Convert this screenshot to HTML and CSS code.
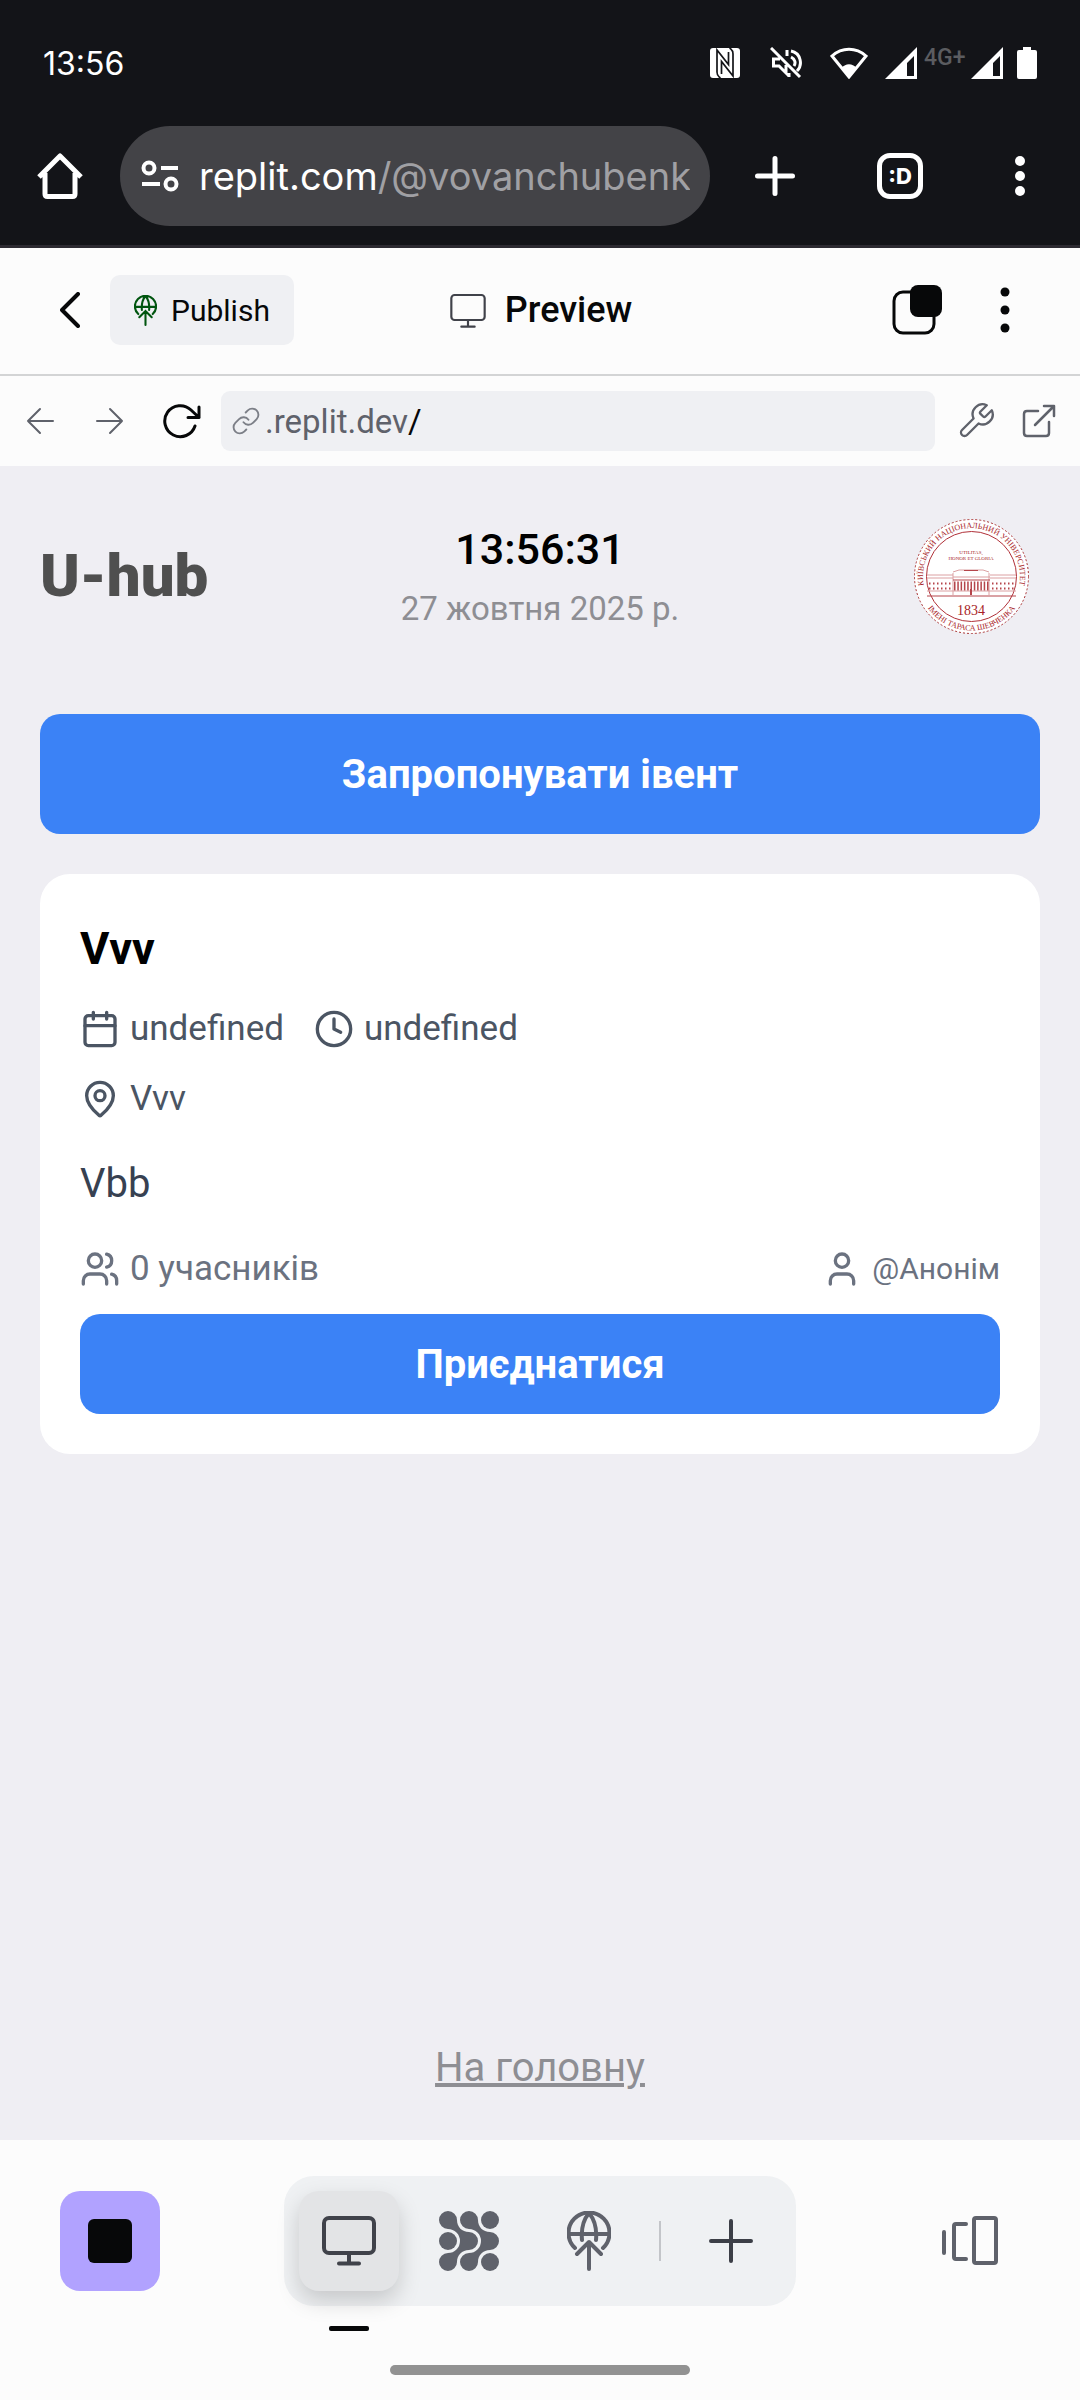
FILE: index.html
```html
<!DOCTYPE html>
<html lang="uk">
<head>
<meta charset="utf-8">
<meta name="viewport" content="width=device-width, initial-scale=1">
<title>U-hub</title>
<link rel="stylesheet" href="styles.css">
</head>
<body>
<svg width="0" height="0" class="defs" aria-hidden="true">
  <symbol id="monitor" viewBox="0 0 24 24"><rect x="2" y="3" width="20" height="15" rx="2"/><path d="M12 18v4M8 22h8"/></symbol>
  <symbol id="publish" viewBox="0 0 44 60"><path d="M8 37A20.500 20.500 0 1 1 36 37M2 23h40M15 29C14 18 17 8 22 2c5 6 8 16 7 27M22 58V31M10 43l12-12 12 12"/></symbol>
  <symbol id="signal" viewBox="0 0 32 32"><path fill="currentColor" fill-rule="evenodd" d="M32 0v32H0zM29 9l-7 7v13h7z"/></symbol>
</svg>

<div class="screen">
  <header class="browser">
    <div class="status">
      <span class="status-time">13:56</span>
      <div class="status-icons">
        <svg class="nfc" viewBox="0 0 30 30"><rect width="30" height="30" rx="3" fill="#fff"/><path d="M10.500 30Q7 28 7 24V2l11.500 14.500V4M19.500 0Q23 2 23 6v22L11.500 13.500V26" fill="none" stroke="#131418" stroke-width="1.700"/></svg>
        <svg class="mute" viewBox="0 0 32 32" fill="none" stroke="#fff" stroke-width="3"><path d="M10 12H3.500v7H9l7 7v-8M17 9V3M21 4c10 2 12 14 6 20M21 10c4 2 5 6 3 9M19 26v4M1 1l29 29"/></svg>
        <svg class="wifi" viewBox="0 0 38 32"><path d="M2 9c10-9 24-9 34 0L19 30z" fill="none" stroke="#fff" stroke-width="3"/><path d="M12 21c3-5 11-5 14 0l-7 10z" fill="#fff"/></svg>
        <svg class="sig"><use href="#signal"/></svg>
        <span class="network">4G+</span>
        <svg class="sig"><use href="#signal"/></svg>
        <svg class="battery" viewBox="0 0 20 32"><path fill="#fff" d="M6 0h8v3h4q2 0 2 2v25q0 2-2 2H2q-2 0-2-2V5q0-2 2-2h4z"/></svg>
      </div>
    </div>
    <div class="address-bar">
      <button class="icon-btn" aria-label="Home"><svg class="i46" viewBox="0 0 46 46" fill="none" stroke="#fff" stroke-width="5" stroke-linejoin="round"><path d="M2 24 23 3l21 21M8 20v21q0 2.500 2.500 2.500h25Q38 43.500 38 41V20"/></svg></button>
      <div class="address">
        <svg class="tune" viewBox="0 0 38 32" fill="none" stroke="#fff" stroke-width="4"><circle cx="8" cy="8" r="5.500"/><circle cx="30" cy="24" r="5.500"/><path d="M20 8h17M1 24h18"/></svg>
        <div class="url">replit.com<span>/@vovanchubenk</span></div>
      </div>
      <button class="icon-btn" aria-label="New tab"><svg class="i46" viewBox="0 0 46 46" stroke="#fff" stroke-width="5" stroke-linecap="round"><path d="M23 5.500v35M5.500 23h35"/></svg></button>
      <button class="icon-btn tabs"><span>:D</span></button>
      <button class="icon-btn" aria-label="More"><svg class="i46" viewBox="0 0 46 46" fill="#fff"><circle cx="23" cy="8" r="5"/><circle cx="23" cy="23" r="5"/><circle cx="23" cy="38" r="5"/></svg></button>
    </div>
  </header>

  <nav class="workspace">
    <div class="workspace-left">
      <button class="icon-btn" aria-label="Back"><svg class="chevron" viewBox="0 0 20 36"><path d="M18 2 2 18l16 16"/></svg></button>
      <button class="publish"><svg><use href="#publish"/></svg>Publish</button>
    </div>
    <div class="workspace-title"><svg><use href="#monitor"/></svg>Preview</div>
    <div class="workspace-right">
      <button class="icon-btn" aria-label="Tabs"><svg class="i50" viewBox="0 0 50 50"><rect x="2" y="7" width="40" height="41" rx="9" fill="none" stroke="#070809" stroke-width="3"/><rect x="18" y="0" width="32" height="32" rx="8" fill="#070809"/></svg></button>
      <button class="icon-btn" aria-label="Menu"><svg class="i46" viewBox="0 0 46 46" fill="#070809"><circle cx="23" cy="5" r="4.500"/><circle cx="23" cy="23" r="4.500"/><circle cx="23" cy="41" r="4.500"/></svg></button>
    </div>
  </nav>

  <div class="preview-bar">
    <button class="icon-btn" aria-label="Back"><svg class="arrow" viewBox="0 0 28 28"><path d="M27 14H2M14 2 2 14l12 12"/></svg></button>
    <button class="icon-btn" aria-label="Forward"><svg class="arrow" viewBox="0 0 28 28"><path d="M1 14h25M14 2l12 12-12 12"/></svg></button>
    <button class="icon-btn" aria-label="Reload"><svg class="reload" viewBox="0 0 38 36"><path d="M32 23A15.500 15.500 0 1 1 28 7l8 7.500M36 4v10.500H25"/></svg></button>
    <div class="preview-url">
      <svg viewBox="0 0 24 24"><path d="M10 13a5 5 0 0 0 7.540.540l3-3a5 5 0 0 0-7.070-7.070l-1.720 1.710M14 11a5 5 0 0 0-7.540-.540l-3 3a5 5 0 0 0 7.070 7.070l1.710-1.710"/></svg>
      <span>.replit.dev<b>/</b></span>
    </div>
    <button class="icon-btn" aria-label="Tools"><svg class="tool" viewBox="0 0 24 24"><path d="M14.700 6.300a1 1 0 0 0 0 1.400l1.600 1.600a1 1 0 0 0 1.400 0l3.770-3.770a6 6 0 0 1-7.940 7.940l-6.910 6.910a2.120 2.120 0 0 1-3-3l6.910-6.910a6 6 0 0 1 7.940-7.940l-3.760 3.760z"/></svg></button>
    <button class="icon-btn" aria-label="Open"><svg class="external" viewBox="0 0 34 34"><path d="M16 7H5q-3 0-3 3v19q0 3 3 3h19q3 0 3-3V18M22 2h10v10M32 2 13 21"/></svg></button>
  </div>

  <main class="app">
    <div class="app-header">
      <h1>U-hub</h1>
      <div class="clock">
        <time class="clock-time">13:56:31</time>
        <span class="clock-date">27 жовтня 2025 р.</span>
      </div>
      <svg class="seal" viewBox="0 0 140 140">
        <defs><path id="arc-top" d="M27.500 91A48.500 48.500 0 1 1 115.500 91"/><path id="arc-bottom" d="M17.500 70.500A54 54 0 0 0 125.500 70.500"/></defs>
        <circle cx="71.500" cy="70.500" r="57" fill="#fff" stroke="#a33" stroke-width="1" stroke-dasharray="2 2"/>
        <circle cx="71.500" cy="70.500" r="45" fill="none" stroke="#b03038" stroke-width="1"/>
        <g class="seal-text">
          <text font-size="8"><textPath href="#arc-top" startOffset="50%" text-anchor="middle">КИЇВСЬКИЙ НАЦІОНАЛЬНИЙ УНІВЕРСИТЕТ</textPath></text>
          <text font-size="8"><textPath href="#arc-bottom" startOffset="50%" text-anchor="middle">ІМЕНІ ТАРАСА ШЕВЧЕНКА</textPath></text>
          <text x="71" y="48" font-size="5" text-anchor="middle">UTILITAS,</text>
          <text x="71" y="54" font-size="5" text-anchor="middle">HONOR ET GLORIA</text>
          <text x="71" y="109" font-size="14" text-anchor="middle">1834</text>
        </g>
        <g fill="none" stroke="#b5454b"><path stroke="#dba0a2" d="M27 69h26M90 69h26M27 72h26M90 72h26M53 67v22M89 67v22M53 66l6-2h24l6 2M53 71h37M27 85h89"/><path d="M64 64.500h14M27 90h89M53 74h37"/><path stroke-width="2" stroke-dasharray="1.500 2.500" d="M29 77.500h24M92 77.500h24M29 82.500h24M92 82.500h24"/><path stroke-width="9" stroke-dasharray="1.500 1.800" d="M54 80h35"/><path stroke-width="2" d="M71 83v6"/></g>
      </svg>
    </div>

    <button class="primary propose">Запропонувати івент</button>

    <article class="card">
      <h2>Vvv</h2>
      <div class="meta">
        <span class="item"><svg viewBox="0 0 24 24"><path d="M8 2v4M16 2v4M3 10h18"/><rect x="3" y="4" width="18" height="18" rx="2"/></svg>undefined</span>
        <span class="item"><svg viewBox="0 0 24 24"><circle cx="12" cy="12" r="10"/><path d="M12 6v6l4 2"/></svg>undefined</span>
      </div>
      <div class="meta">
        <span class="item"><svg viewBox="0 0 24 24"><path d="M20 10c0 4.990-5.540 10.190-7.400 11.800a1 1 0 0 1-1.200 0C9.540 20.190 4 14.990 4 10a8 8 0 0 1 16 0"/><circle cx="12" cy="10" r="3"/></svg>Vvv</span>
      </div>
      <p>Vbb</p>
      <div class="people">
        <span class="item"><svg viewBox="0 0 24 24"><path d="M16 21v-2a4 4 0 0 0-4-4H6a4 4 0 0 0-4 4v2M22 21v-2a4 4 0 0 0-3-3.870M16 3.130a4 4 0 0 1 0 7.750"/><circle cx="9" cy="7" r="4"/></svg>0 учасників</span>
        <span class="item author"><svg viewBox="0 0 24 24"><path d="M19 21v-2a4 4 0 0 0-4-4H9a4 4 0 0 0-4 4v2"/><circle cx="12" cy="7" r="4"/></svg>@Анонім</span>
      </div>
      <button class="primary join">Приєднатися</button>
    </article>

    <a class="home-link" href="#">На головну</a>
  </main>

  <footer class="dock">
    <div class="dock-row">
      <button class="tile stop" aria-label="Stop"><span></span></button>
      <div class="group">
        <button class="tile active" aria-label="Preview"><svg class="d-monitor" viewBox="0 0 54 50"><rect x="2" y="2" width="50" height="35" rx="5"/><path d="M27 37v10M17 47.500h20"/></svg></button>
        <button class="tile" aria-label="Agent"><svg class="agent" viewBox="0 0 60 60"><path d="M9 0A9 9 0 0 1 18 9C18 16 23 21 30 21A9 9 0 0 1 30 39C23 39 18 44 18 51A9 9 0 1 1 9 42A12 12 0 0 0 9 18A9 9 0 0 1 9 0z"/><path d="M30 0A9 9 0 0 1 39 9C39 16 44 21 51 21A9 9 0 0 1 51 39C44 39 39 44 39 51A9 9 0 1 1 30 42A12 12 0 0 0 30 18A9 9 0 0 1 30 0z"/><circle cx="51" cy="9" r="9"/><circle cx="9" cy="30" r="9"/><circle cx="51" cy="51" r="9"/></svg></button>
        <button class="tile" aria-label="Publish"><svg class="d-publish"><use href="#publish"/></svg></button>
        <span class="divider"></span>
        <button class="tile" aria-label="Add"><svg class="d-plus" viewBox="0 0 44 44"><path d="M22 2v40M2 22h40"/></svg></button>
      </div>
      <button class="tile" aria-label="Switch"><svg class="switch" viewBox="0 0 56 50"><path d="M2 16v21M24 8H14q-2 0-2 2v31q0 2 2 2h10"/><rect x="32" y="2" width="22" height="45" rx="2"/></svg></button>
    </div>
    <div class="gesture"></div>
  </footer>
</div>
</body>
</html>
```
FILE: styles.css
```css
* { box-sizing: border-box; }
body { margin: 0; font-family: Roboto, "Noto Sans", sans-serif; background: #fcfcfc; }
h1, h2, p { margin: 0; }
svg { display: block; flex: none; }
button { border: 0; padding: 0; background: none; font: inherit; color: inherit; cursor: pointer; }
.defs { position: absolute; }
.screen { min-height: 100vh; display: flex; flex-direction: column; }
.icon-btn { display: grid; place-items: center; flex: none; }
.i46 { width: 46px; height: 46px; }
.i50 { width: 50px; height: 50px; }

/* browser chrome */
.browser { background: #131418; color: #fff; border-bottom: 3px solid #2c2a31; font-family: Inter, Roboto, sans-serif; }
.status { height: 126px; padding: 0 43px; display: flex; align-items: center; justify-content: space-between; }
.status-time { font-size: 32px; }
.status-icons { display: flex; align-items: center; }
.nfc { width: 30px; height: 30px; margin-right: 30px; }
.mute { width: 32px; height: 32px; margin-right: 28px; }
.wifi { width: 38px; height: 32px; margin-right: 17px; }
.sig { width: 32px; height: 32px; }
.network { width: 54px; height: 32px; padding-left: 7px; font: 500 23px/22px Roboto, sans-serif; color: #5b5c60; }
.battery { width: 20px; height: 32px; margin-left: 14px; }
.address-bar { display: flex; align-items: center; padding: 0 37px 19px; }
.address { flex: 1; min-width: 0; height: 100px; margin: 0 42px 0 37px; padding: 0 20px 0 21px; border-radius: 50px; background: #434347; display: flex; align-items: center; gap: 20px; }
.tune { width: 38px; height: 32px; }
.url { flex: 1; min-width: 0; overflow: hidden; white-space: nowrap; font-size: 38px; line-height: 50px; }
.url span { color: #a0a0a4; }
.tabs { width: 46px; height: 46px; margin: 0 74px 0 79px; border: 5px solid #fff; border-radius: 13px; font-size: 22px; font-weight: 800; line-height: 1; }

/* workspace header */
.workspace { height: 128px; padding: 0 52px 2px; display: grid; grid-template-columns: 1fr auto 1fr; align-items: center; background: #fcfcfc; border-bottom: 2px solid #d3d4d5; color: #070809; }
.workspace-left { display: flex; align-items: center; gap: 30px; padding-left: 8px; }
.chevron { width: 20px; height: 36px; fill: none; stroke: #070809; stroke-width: 4; stroke-linecap: round; stroke-linejoin: round; }
.publish { height: 70px; padding: 0 24px; display: flex; align-items: center; gap: 14px; border-radius: 10px; background: #eff0f3; font-size: 30px; }
.publish svg { width: 23px; height: 31px; fill: none; stroke: #00550f; stroke-width: 4; stroke-linecap: round; }
.workspace-title { display: flex; align-items: center; gap: 17px; font-size: 36px; font-weight: 500; }
.workspace-title svg { width: 40px; height: 40px; fill: none; stroke: #40424a; stroke-width: 1.3; stroke-linecap: round; }
.workspace-right { display: flex; align-items: center; justify-content: flex-end; gap: 40px; }

/* preview address row */
.preview-bar { height: 90px; padding: 0 24px 0 26px; display: flex; align-items: center; background: #fcfcfc; fill: none; stroke-linecap: round; stroke-linejoin: round; }
.arrow { width: 28px; height: 28px; margin-right: 42px; stroke: #5f626b; stroke-width: 2; }
.reload { width: 38px; height: 36px; margin-right: 20px; margin-left: -3px; stroke: #070809; stroke-width: 3; }
.preview-url { flex: 1; min-width: 0; height: 60px; padding: 0 10px; display: flex; align-items: center; gap: 4px; border-radius: 9px; background: #eff0f3; font-size: 33px; color: #5f626b; }
.preview-url svg { width: 30px; height: 30px; stroke: #7c7f87; stroke-width: 1.5; }
.preview-url b { font-weight: 400; color: #070809; }
.tool { width: 40px; height: 40px; margin: 0 26px 0 21px; stroke: #5f626b; stroke-width: 1.4; }
.external { width: 34px; height: 34px; stroke: #5f626b; stroke-width: 2.5; }

/* app */
.app { flex: 1; display: flex; flex-direction: column; padding: 40px 40px 48px; background: #efeef3; }
.app-header { display: grid; grid-template-columns: 1fr auto 1fr; align-items: center; margin-bottom: 68px; }
.app-header h1 { font-size: 60px; line-height: 72px; font-weight: 900; color: #4f4f4f; }
.clock { display: flex; flex-direction: column; align-items: center; gap: 10px; }
.clock-time { font-size: 43px; line-height: 56px; font-weight: 500; color: #000; }
.clock-date { font-size: 33px; line-height: 44px; color: #8e8e93; }
.seal { width: 140px; height: 140px; justify-self: end; }
.seal-text { font-family: "Liberation Serif", serif; fill: #a81e28; }
.primary { width: 100%; border-radius: 20px; background: #3b82f6; color: #fff; font-size: 40px; font-weight: 700; }
.propose { height: 120px; }
.card { margin-top: 40px; padding: 40px; border-radius: 30px; background: #fff; }
.card h2 { font-size: 45px; line-height: 70px; font-weight: 700; color: #000; margin-bottom: 20px; }
.meta { display: flex; gap: 30px; margin-bottom: 20px; color: #4b5563; }
.item { display: flex; align-items: center; gap: 10px; font-size: 35px; line-height: 50px; }
.item svg { width: 40px; height: 40px; fill: none; stroke: currentColor; stroke-width: 2; stroke-linecap: round; stroke-linejoin: round; }
.card p { font-size: 40px; line-height: 60px; color: #374151; margin: 30px 0; }
.people { display: flex; justify-content: space-between; color: #6b7280; margin-bottom: 20px; }
.author { font-size: 30px; }
.join { height: 100px; }
.home-link { align-self: center; margin-top: auto; font-size: 40px; line-height: 48px; color: #8e8e93; text-decoration: underline; text-decoration-thickness: 4px; }

/* dock */
.dock { padding: 36px 60px 25px; background: #fcfcfc; fill: none; stroke: #5f626b; stroke-width: 4; stroke-linecap: round; stroke-linejoin: round; }
.dock-row { display: grid; grid-template-columns: 1fr auto 1fr; align-items: center; }
.dock-row > :last-child { justify-self: end; }
.tile { position: relative; width: 100px; height: 100px; border-radius: 20px; display: grid; place-items: center; }
.stop { background: #b1a2ff; }
.stop span { width: 44px; height: 44px; border-radius: 6px; background: #070809; }
.group { display: flex; align-items: center; gap: 20px; padding: 15px; border-radius: 30px; background: #eff1f3; }
.active { background: #e3e4e6; box-shadow: 0 10px 22px rgba(0, 0, 0, .17); }
.active::after { content: ""; position: absolute; bottom: -40px; left: 30px; width: 40px; height: 5px; border-radius: 2px; background: #070809; }
.d-monitor { width: 54px; height: 50px; stroke: #40424a; }
.agent { width: 60px; height: 60px; fill: #5f626b; stroke: none; }
.d-publish { width: 44px; height: 60px; }
.divider { width: 2px; height: 40px; background: #c3c5c9; }
.d-plus { width: 44px; height: 44px; stroke: #3c3f47; }
.switch { width: 56px; height: 50px; }
.gesture { width: 300px; height: 10px; margin: 59px auto 0; border-radius: 5px; background: #929292; }
```
